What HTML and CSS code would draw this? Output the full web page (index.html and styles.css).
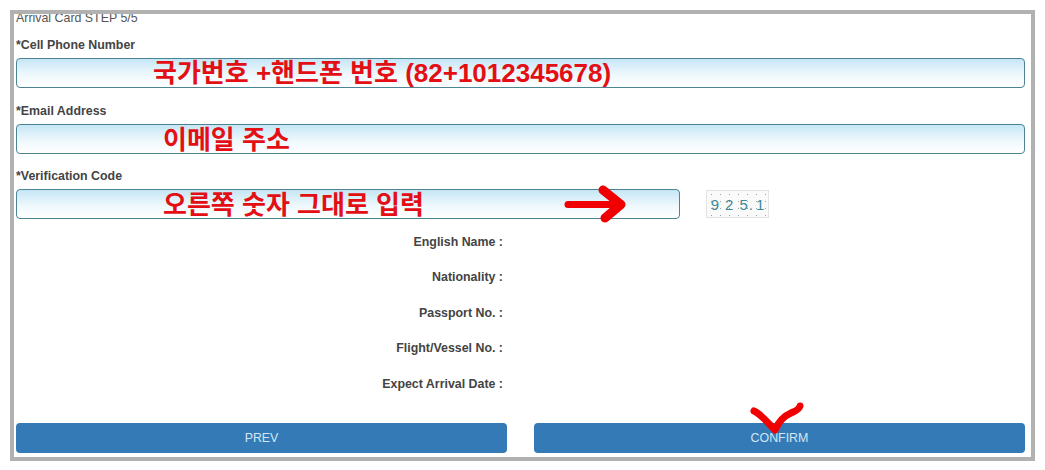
FILE: index.html
```html
<!DOCTYPE html>
<html lang="ko">
<head>
<meta charset="utf-8">
<title>Arrival Card STEP 5/5</title>
<link rel="stylesheet" href="styles.css">
</head>
<body>
<main class="frame">
  <div class="title">Arrival Card STEP 5/5</div>
  <form class="fields">
    <div class="field">
      <label class="label">*Cell Phone Number</label>
      <div class="input-wrap">
        <div class="input"></div>
        <span class="note note-phone">국가번호 +핸드폰 번호 (82+1012345678)</span>
      </div>
    </div>
    <div class="field">
      <label class="label">*Email Address</label>
      <div class="input-wrap">
        <div class="input"></div>
        <span class="note note-email">이메일 주소</span>
      </div>
    </div>
    <div class="field">
      <label class="label">*Verification Code</label>
      <div class="code-row">
        <div class="input-wrap code-input">
          <div class="input"></div>
          <span class="note note-code">오른쪽 숫자 그대로 입력</span>
          <svg class="arrow" width="64" height="40" viewBox="0 0 64 40" fill="none" stroke="#f00000" stroke-linecap="round" stroke-linejoin="round"><path d="M5 20.500H57" stroke-width="7"/><path d="M40 6L58 20.500L42 34" stroke-width="9"/></svg>
        </div>
        <div class="captcha"><span>9</span><span>2</span><span>5</span><span class="dot">.</span><span>1</span></div>
      </div>
    </div>
  </form>
  <dl class="summary">
    <div class="summary-row"><dt>English Name :</dt><dd></dd></div>
    <div class="summary-row"><dt>Nationality :</dt><dd></dd></div>
    <div class="summary-row"><dt>Passport No. :</dt><dd></dd></div>
    <div class="summary-row"><dt>Flight/Vessel No. :</dt><dd></dd></div>
    <div class="summary-row"><dt>Expect Arrival Date :</dt><dd></dd></div>
  </dl>
  <div class="actions">
    <button class="btn" type="button">PREV</button>
    <button class="btn confirm" type="button">CONFIRM
      <svg class="check" width="60" height="40" viewBox="0 0 60 40" fill="none" stroke="#f00000" stroke-width="7" stroke-linecap="round" stroke-linejoin="round"><path d="M6 12C13 15 19 23 27 31C30 24 36 17 43 14C47 12 51 11 52 7"/></svg>
    </button>
  </div>
</main>
</body>
</html>
```
FILE: styles.css
```css
html, body {
  margin: 0;
  padding: 0;
  background: #fff;
}
body {
  width: 1045px;
  height: 470px;
  overflow: hidden;
  font-family: "Liberation Sans", Arial, sans-serif;
  color: #333;
}
.frame {
  box-sizing: border-box;
  width: 1025px;
  height: 451px;
  margin: 10px 0 0 10px;
  border: 4px solid #b1b1b1;
  padding: 0 6px 4px 2px;
  overflow: hidden;
  display: flex;
  flex-direction: column;
  background: #fff;
}
.title {
  height: 9px;
  line-height: 8px;
  font-size: 12.400px;
  color: #555;
}
.fields {
  display: flex;
  flex-direction: column;
  gap: 15.500px;
  margin-top: 15px;
}
.field {
  display: flex;
  flex-direction: column;
  gap: 6px;
}
.label {
  display: block;
  height: 14px;
  line-height: 14px;
  font-size: 12.400px;
  font-weight: bold;
  color: #444;
}
.input-wrap {
  position: relative;
  height: 30px;
}
.input {
  box-sizing: border-box;
  height: 100%;
  border: 1px solid #4d8493;
  border-radius: 4px;
  background: linear-gradient(to bottom, #c5e6f6 0%, #eef8fc 55%, #ffffff 100%);
}
.note {
  position: absolute;
  top: 0;
  white-space: nowrap;
  font-family: "Liberation Sans", "Noto Sans CJK KR", sans-serif;
  font-weight: bold;
  font-size: 26px;
  line-height: 30px;
  color: #e30f14;
}
.note-phone { left: 137px; }
.note-email { left: 147px; top: 1px; }
.note-code { left: 147px; top: 1px; }
.code-row {
  display: flex;
  align-items: center;
  gap: 26px;
}
.code-input {
  width: 664px;
  flex: none;
}
.arrow {
  position: absolute;
  left: 547px;
  top: -5px;
}
.captcha {
  box-sizing: border-box;
  width: 63px;
  height: 28px;
  display: flex;
  align-items: center;
  justify-content: center;
  gap: 6px;
  border: 1px solid #e3e3e3;
  background-color: #fafafa;
  background-image: radial-gradient(#8fa5aa 0.6px, transparent 0.9px);
  background-size: 9px 7px;
  font-family: "Liberation Sans", sans-serif;
  font-size: 15px;
  color: #3f8798;
}
.dot {
  margin: 0 -3px 0 -5px;
}
.summary {
  margin: 5px 0 0;
  display: flex;
  flex-direction: column;
}
.summary-row {
  display: flex;
  height: 35.500px;
  align-items: center;
}
.summary dt {
  width: 487px;
  text-align: right;
  font-size: 12.400px;
  font-weight: bold;
  color: #444;
}
.summary dd {
  margin: 0;
}
.actions {
  margin-top: auto;
  display: flex;
  gap: 27px;
}
.btn {
  flex: 1;
  height: 30px;
  padding: 0;
  border: 0;
  border-radius: 4px;
  background: #337ab7;
  color: #d3e6f2;
  font-family: "Liberation Sans", Arial, sans-serif;
  font-size: 12.400px;
}
.confirm {
  position: relative;
}
.check {
  position: absolute;
  left: 214px;
  top: -24px;
}
```
